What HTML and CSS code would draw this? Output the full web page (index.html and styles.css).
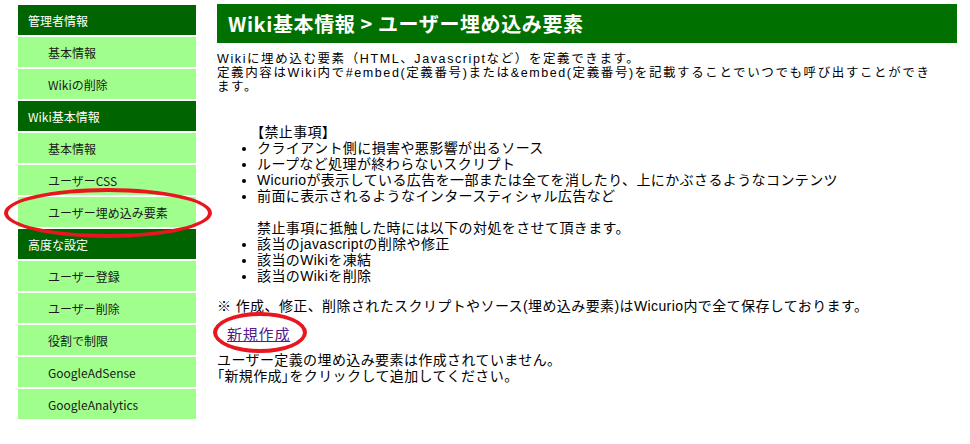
FILE: index.html
```html
<!DOCTYPE html>
<html lang="ja">
<head>
    <meta charset="UTF-8">
    <title>ユーザー埋め込み要素</title>
    <link rel="stylesheet" href="styles.css">
</head>
<body>

    <div class="page">
        <!-- サイドメニュー -->
        <nav class="side">
            <div class="side-head">管理者情報</div>
            <a class="side-item" href="#">基本情報</a>
            <a class="side-item" href="#">Wikiの削除</a>
            <div class="side-head">Wiki基本情報</div>
            <a class="side-item" href="#">基本情報</a>
            <a class="side-item" href="#">ユーザーCSS</a>
            <a class="side-item" href="#">ユーザー埋め込み要素</a>
            <div class="side-head">高度な設定</div>
            <a class="side-item" href="#">ユーザー登録</a>
            <a class="side-item" href="#">ユーザー削除</a>
            <a class="side-item" href="#">役割で制限</a>
            <a class="side-item" href="#">GoogleAdSense</a>
            <a class="side-item" href="#">GoogleAnalytics</a>
        </nav>

        <!-- 本文 -->
        <main class="content">
            <h1 class="title">Wiki基本情報 &gt; ユーザー埋め込み要素</h1>

            <p class="intro">Wikiに埋め込む要素（HTML、Javascriptなど）を定義できます。<br>定義内容はWiki内で#embed(定義番号)または&amp;embed(定義番号)を記載することでいつでも呼び出すことができ<br>ます。</p>

            <ul class="rules">
                <li class="rules-head packed">【禁止事項】</li>
                <li>クライアント側に損害や悪影響が出るソース</li>
                <li>ループなど処理が終わらないスクリプト</li>
                <li>Wicurioが表示している広告を一部または全てを消したり、上にかぶさるようなコンテンツ</li>
                <li>前面に表示されるようなインタースティシャル広告など</li>
            </ul>

            <ul class="rules rules-next">
                <li class="rules-head">禁止事項に抵触した時には以下の対処をさせて頂きます。</li>
                <li>該当のjavascriptの削除や修正</li>
                <li>該当のWikiを凍結</li>
                <li>該当のWikiを削除</li>
            </ul>

            <p class="note">※ 作成、修正、削除されたスクリプトやソース(埋め込み要素)はWicurio内で全て保存しております。</p>

            <a class="new-link" href="#">新規作成</a>

            <p class="empty">ユーザー定義の埋め込み要素は作成されていません。<br><span class="packed">「新規作成」</span>をクリックして追加してください。</p>
        </main>
    </div>

    <!-- 赤い丸の注記 -->
    <div class="mark mark-side"></div>
    <div class="mark mark-new"></div>

</body>
</html>
```

FILE: styles.css
```css
body {
    margin: 0;
    background-color: #fff;
    color: #000;
    font-family: "Liberation Sans", "Noto Sans CJK JP", sans-serif;
}

.page {
    display: flex;
    align-items: flex-start;
    gap: 21px;
    padding: 4px 13px 0 18px;
}

/* サイドメニュー */
.side {
    width: 178px;
    flex-shrink: 0;
    margin-top: 1px;
    display: flex;
    flex-direction: column;
    gap: 2px;
    font-family: "Noto Sans CJK JP", sans-serif;
    font-size: 12px;
}

.side-head,
.side-item {
    height: 30px;
    display: flex;
    align-items: center;
}

.side-head {
    background-color: #006400;
    color: #fff;
    padding-left: 10px;
}

.side-item {
    background-color: #a0ff8c;
    color: #1a1a1a;
    padding-left: 30px;
    text-decoration: none;
}

/* 本文 */
.content {
    width: 740px;
    font-size: 14px;
    line-height: 16px;
    letter-spacing: 0.4px;
}

.title {
    margin: 0;
    height: 39px;
    padding-left: 11px;
    display: flex;
    align-items: center;
    background-color: #007000;
    color: #fff;
    font-family: "Noto Sans CJK JP", sans-serif;
    font-size: 20px;
    font-weight: bold;
    letter-spacing: 0.6px;
}

.intro {
    margin: 9px 0 0;
    font-size: 12.5px;
    line-height: 14px;
    letter-spacing: 1.6px;
}

.rules {
    margin: 30px 0 0;
    padding-left: 40px;
}

.rules-next {
    margin-top: 16px;
}

.rules-head {
    list-style: none;
}

.packed {
    font-feature-settings: "palt";
}

.note {
    margin: 14px 0 0;
}

.new-link {
    display: inline-block;
    margin: 13px 0 0 10px;
    font-size: 15px;
    letter-spacing: 0.8px;
    color: #551a8b;
}

.empty {
    margin: 9px 0 0;
}

/* 注記の赤丸 */
.mark {
    position: absolute;
    border: 4px solid #e8161e;
    border-radius: 50%;
    box-sizing: border-box;
}

.mark-side {
    left: 4px;
    top: 188px;
    width: 208px;
    height: 50px;
}

.mark-new {
    left: 213px;
    top: 312px;
    width: 94px;
    height: 41px;
}
```
